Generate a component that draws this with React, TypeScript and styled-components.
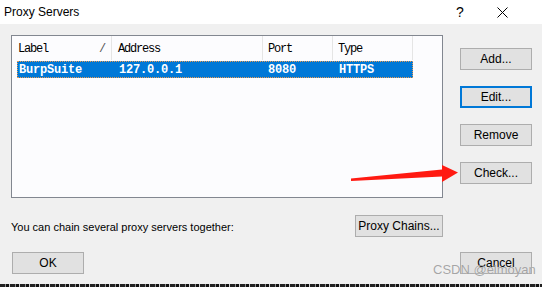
import React from "react";
import styled, { createGlobalStyle } from "styled-components";

const Global = createGlobalStyle`
  html, body { margin: 0; padding: 0; background: #f0f0f0; }
  * { box-sizing: border-box; }
`;

const Window = styled.div`
  position: relative;
  width: 542px;
  height: 287px;
  overflow: hidden;
  background: #f0f0f0;
  display: flex;
  flex-direction: column;
  font-family: "Liberation Sans", Arial, sans-serif;
  font-size: 12px;
  color: #000;
`;

const TitleBar = styled.div`
  height: 24px;
  flex: none;
  background: #ffffff;
  display: flex;
  align-items: center;
  padding-left: 4px;
`;

const Title = styled.div`
  flex: 1;
  font-size: 12px;
  padding-bottom: 1px;
`;

const TitleBtn = styled.div<{ $w: number; $shift?: number }>`
  width: ${(p) => p.$w}px;
  height: 24px;
  display: flex;
  align-items: center;
  justify-content: center;
  padding-right: ${(p) => p.$shift ?? 0}px;
  font-size: 14px;
`;

const Content = styled.div`
  flex: 1;
  padding: 11px 10px 0 11px;
  display: flex;
  flex-direction: column;
`;

const TopRow = styled.div`
  display: flex;
  align-items: flex-start;
`;

const List = styled.div`
  width: 432px;
  height: 163px;
  border: 1px solid #828790;
  background: #fcfcfe;
  padding-left: 5px;
`;

const Grid = styled.div`
  display: grid;
  grid-template-columns: 95px 151px 70px 80px;
`;

const HeaderCell = styled.div<{ $pad: number }>`
  height: 24px;
  display: flex;
  align-items: center;
  justify-content: space-between;
  padding: 2px 6px 0 ${(p) => p.$pad}px;
  border-right: 1px solid #e5e5e5;
  font-family: "Liberation Mono", "Courier New", monospace;
  font-size: 12px;
  letter-spacing: -1.2px;
`;

const SelRow = styled.div`
  grid-column: 1 / -1;
  display: grid;
  grid-template-columns: 95px 151px 70px 80px;
  height: 17px;
  margin-top: 1px;
  background: #0078d7;
  outline: 1px dotted #e89a52;
  outline-offset: -1px;
`;

const Cell = styled.div<{ $pad: number }>`
  display: flex;
  align-items: center;
  padding-left: ${(p) => p.$pad}px;
  color: #fff;
  font-family: "Liberation Mono", "Courier New", monospace;
  font-weight: bold;
  font-size: 12px;
  letter-spacing: -0.2px;
`;

const ButtonCol = styled.div`
  display: flex;
  flex-direction: column;
  gap: 16px;
  margin-left: 17px;
  padding-top: 13px;
`;

const Button = styled.button<{ $w?: number; $focus?: boolean }>`
  width: ${(p) => p.$w ?? 72}px;
  height: 22px;
  margin: 0;
  padding: 0;
  background: #e1e1e1;
  border: ${(p) => (p.$focus ? "2px solid #0078d7" : "1px solid #adadad")};
  font-family: "Liberation Sans", Arial, sans-serif;
  font-size: 12px;
  color: #000;
  display: flex;
  align-items: center;
  justify-content: center;
`;

const ChainRow = styled.div`
  width: 432px;
  margin-top: 17px;
  display: flex;
  align-items: center;
  justify-content: space-between;
`;

const ChainText = styled.span`
  font-size: 11px;
  padding-top: 1px;
`;

const BottomRow = styled.div`
  margin-top: 15px;
  padding-left: 1px;
  display: flex;
  justify-content: space-between;
`;

const Strip = styled.div`
  height: 3px;
  flex: none;
  background: repeating-linear-gradient(
    90deg,
    #222 0 5px,
    #888 5px 6px,
    #111 6px 9px,
    #ccc 9px 10px
  );
`;

const Arrow = styled.svg`
  position: absolute;
  left: 0;
  top: 0;
  pointer-events: none;
`;

const Watermark = styled.div`
  position: absolute;
  left: 433px;
  top: 262px;
  font-family: "Liberation Sans", Arial, sans-serif;
  font-size: 13px;
  color: rgba(150, 150, 150, 0.85);
  text-shadow: 0 0 1px rgba(255, 255, 255, 0.6);
  pointer-events: none;
`;

export default function App() {
  return (
    <>
      <Global />
      <Window>
        <TitleBar>
          <Title>Proxy Servers</Title>
          <TitleBtn $w={30} $shift={8}>?</TitleBtn>
          <TitleBtn $w={46}>
            <svg width="11" height="11" viewBox="0 0 11 11">
              <path d="M0.5 0.5L10.5 10.5M10.5 0.5L0.5 10.5" stroke="#000" strokeWidth="1" />
            </svg>
          </TitleBtn>
          <div style={{ width: 17 }} />
        </TitleBar>
        <Content>
          <TopRow>
            <List>
              <Grid>
                <HeaderCell $pad={1}>
                  <span>Label</span>
                  <span style={{ color: "#555" }}>/</span>
                </HeaderCell>
                <HeaderCell $pad={6}>Address</HeaderCell>
                <HeaderCell $pad={5}>Port</HeaderCell>
                <HeaderCell $pad={5}>Type</HeaderCell>
                <SelRow>
                  <Cell $pad={2}>BurpSuite</Cell>
                  <Cell $pad={7}>127.0.0.1</Cell>
                  <Cell $pad={5}>8080</Cell>
                  <Cell $pad={6}>HTTPS</Cell>
                </SelRow>
              </Grid>
            </List>
            <ButtonCol>
              <Button>Add...</Button>
              <Button $focus>Edit...</Button>
              <Button>Remove</Button>
              <Button>Check...</Button>
            </ButtonCol>
          </TopRow>
          <ChainRow>
            <ChainText>You can chain several proxy servers together:</ChainText>
            <Button $w={88}>Proxy Chains...</Button>
          </ChainRow>
          <BottomRow>
            <Button>OK</Button>
            <Button>Cancel</Button>
          </BottomRow>
        </Content>
        <Strip />
        <Arrow width="542" height="287" viewBox="0 0 542 287">
          <polygon
            points="351,178.5 442,169.5 442,165 458,172.5 442,182 442,176.5 351,181"
            fill="#ff1a12"
          />
        </Arrow>
        <Watermark>CSDN @elmoyan</Watermark>
      </Window>
    </>
  );
}
